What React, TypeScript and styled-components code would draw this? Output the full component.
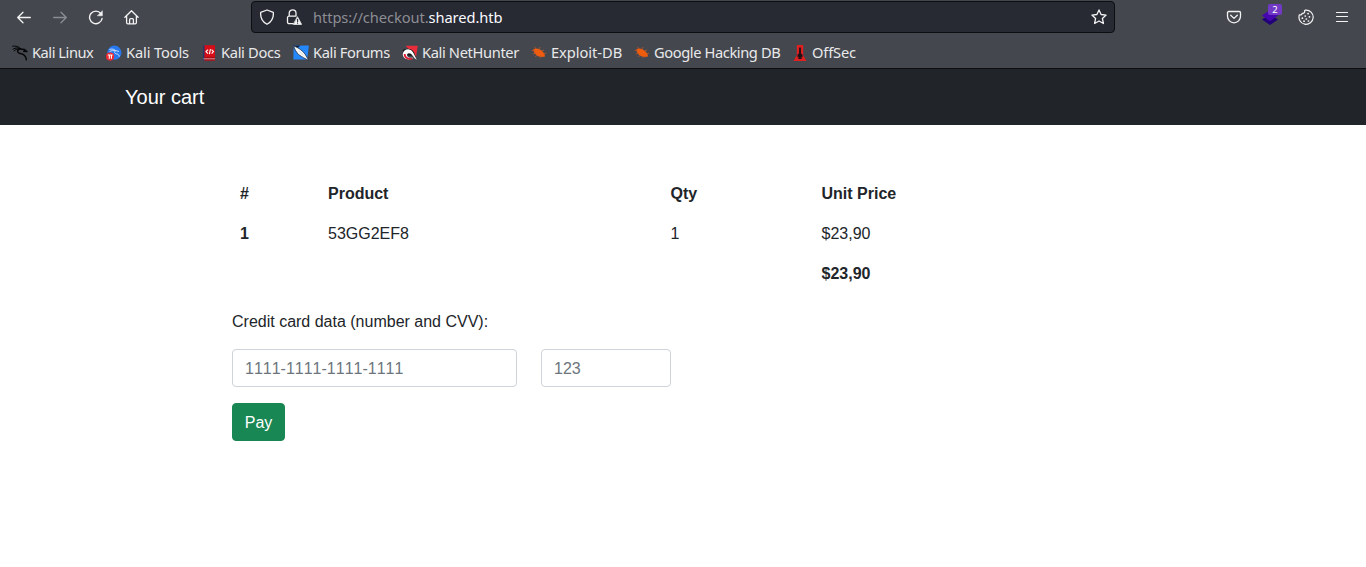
import React from "react";
import styled, { createGlobalStyle } from "styled-components";

const GlobalStyle = createGlobalStyle`
  *, *::before, *::after { box-sizing: border-box; }
  html, body { margin: 0; background: #fff; }
  body { height: 567px; overflow: hidden; }
`;

const Chrome = styled.header`
  display: flex;
  flex-direction: column;
  height: 69px;
  background: #44474e;
  border-bottom: 1px solid #0d0d10;
  font-family: "Noto Sans", sans-serif;
  font-size: 14.67px;
  color: #e9e9ea;
`;

const Toolbar = styled.div`
  display: flex;
  align-items: center;
  height: 34px;
  padding: 0 16px;
`;

const ToolGroup = styled.div<{ $width: number; $end?: boolean }>`
  display: flex;
  gap: 20px;
  width: ${(p) => p.$width}px;
  justify-content: ${(p) => (p.$end ? "flex-end" : "flex-start")};
`;

const ToolIcon = styled.span<{ $dim?: boolean }>`
  position: relative;
  display: flex;
  width: 16px;
  height: 16px;
  opacity: ${(p) => (p.$dim ? 0.4 : 1)};
`;

const Badge = styled.span`
  position: absolute;
  left: 6px;
  top: -5px;
  width: 14px;
  height: 11px;
  border-radius: 2px;
  background: #7139c4;
  color: #fff;
  font-size: 9.5px;
  line-height: 11px;
  text-align: center;
`;

const AddressBar = styled.div`
  display: flex;
  align-items: center;
  width: 864px;
  height: 32px;
  padding: 0 7px;
  border: 1px solid #0d0e12;
  border-radius: 4px;
  background: #272933;
`;

const Address = styled.span`
  flex: 1;
  margin-left: 11px;
  line-height: 20px;
  letter-spacing: -0.08px;
  color: #8d8e93;
`;

const Host = styled.span`
  color: #fbfbfe;
`;

const LockSlot = styled.span`
  display: flex;
  margin-left: 11px;
`;

const Bookmarks = styled.nav`
  display: flex;
  align-items: center;
  height: 34px;
  padding: 2px 12px 0;
`;

const Bookmark = styled.span<{ $width: number; $tracking: number }>`
  display: flex;
  align-items: center;
  gap: 4px;
  width: ${(p) => p.$width}px;
  letter-spacing: ${(p) => p.$tracking}px;
  line-height: 20px;
  white-space: nowrap;
  svg { flex: none; margin-top: 2px; }
`;

const Navbar = styled.div`
  display: flex;
  align-items: center;
  height: 56px;
  padding: 0 125px;
  background: #212529;
  color: #fff;
  font: 20px/30px "Liberation Sans", Arial, sans-serif;
`;

const Main = styled.main`
  width: 902px;
  margin-left: 232px;
  padding-top: 49px;
  color: #212529;
  font: 16px/24px "Liberation Sans", Arial, sans-serif;
`;

const CartTable = styled.table`
  width: 100%;
  table-layout: fixed;
  border-collapse: collapse;
  margin-bottom: 16px;
`;

const Col = styled.col<{ $width?: number }>`
  width: ${(p) => (p.$width ? `${p.$width}px` : "auto")};
`;

const Head = styled.th`
  padding: 8px;
  text-align: left;
  font-weight: 700;
`;

const Cell = styled.td`
  padding: 8px;
`;

const Label = styled.p`
  margin: 0 0 15px;
`;

const Fields = styled.div`
  display: flex;
  gap: 24px;
  margin-bottom: 16px;
`;

const Field = styled.input<{ $width: number }>`
  width: ${(p) => p.$width}px;
  height: 38px;
  padding: 7px 12px 5px;
  border: 1px solid #ced4da;
  border-radius: 4px;
  background: #fff;
  font: inherit;
  font-kerning: none;
  color: #212529;
  &::placeholder { color: #6c757d; opacity: 1; }
`;

const PayButton = styled.button`
  display: block;
  width: 53px;
  height: 38px;
  padding: 7px 0 5px;
  border: 1px solid #198754;
  border-radius: 4px;
  background: #198754;
  color: #fff;
  font: inherit;
`;

const Line = ({ children, width = 1.3 }: { children: React.ReactNode; width?: number }) => (
  <svg width="16" height="16" viewBox="0 0 16 16" fill="none" stroke="#f3f3f4"
    strokeWidth={width} strokeLinecap="round" strokeLinejoin="round">{children}</svg>
);

const Favicon = ({ children }: { children: React.ReactNode }) => (
  <svg width="16" height="16" viewBox="0 0 16 16">{children}</svg>
);

const BackArrow = () => <Line><path d="M14.3 8.5H1.7M7 3.2L1.7 8.5L7 13.8" /></Line>;
const ForwardArrow = () => <Line><path d="M1.7 8.5h12.6M9 3.2l5.3 5.3L9 13.8" /></Line>;
const Reload = () => (
  <Line width={1.4}>
    <path d="M14.1 9.5A6.3 6.3 0 1 1 12.9 4.6" />
    <path d="M14.4 2v4.8H9.6z" fill="#f3f3f4" strokeWidth=".5" />
  </Line>
);
const Home = () => (
  <Line>
    <path d="M.9 8.3L7.5 1.8L14.1 8.3M2.6 7.2v6.4c0 .8.5 1.3 1.3 1.3h7.2c.8 0 1.3-.5 1.3-1.3V7.2M5.6 14.7v-4c0-.7.4-1 1-1h1.8c.6 0 1 .3 1 1v4" />
  </Line>
);
const Shield = () => (
  <Line><path d="M8 1L14.3 3.3C14.8 8.5 12.6 12.8 8 15.3C3.4 12.8 1.2 8.5 1.7 3.3z" /></Line>
);
const LockWarning = () => (
  <Line>
    <path d="M7 14.6H3c-.9 0-1.5-.6-1.5-1.5V8.7c0-.9.6-1.5 1.5-1.5h6.8M3.2 7V4.2a3.4 3.4 0 0 1 6.8 0V7" />
    <path d="M11.6 8l4 7.4H7.6z" fill="#f3f3f4" strokeWidth=".8" />
    <path d="M11.6 10.4v2.2M11.6 14v.2" stroke="#272933" strokeWidth="1.1" />
  </Line>
);
const Star = () => (
  <Line><path d="M8 .9l2.1 4.6 5 .6-3.7 3.4 1 5L8 12l-4.4 2.5 1-5L.9 6.1l5-.6z" /></Line>
);
const Pocket = () => (
  <Line><path d="M2.7 2.5h10.6c.7 0 1.2.5 1.2 1.2v3.6a6.5 6.5 0 0 1-13 0V3.7c0-.7.5-1.2 1.2-1.2zM4.7 6.3L8 9.4l3.3-3.1" /></Line>
);
const Layers = () => (
  <Favicon>
    <path d="M8 5.5l8 5L8 16l-8-5.5z" fill="#220078" />
    <path d="M8 1l8 5.6-8 5.7-8-5.7z" fill="#4707b0" />
  </Favicon>
);
const Cookie = () => (
  <Line width={1.2}>
    <path d="M7.5 1.1a7.1 7.1 0 1 1-6.1 4.7c1.6.5 2.7-.2 2.7-1.5 1.7.4 3.2-.9 2.4-2.5z" />
    <path d="M10 4.6h.1M7.2 7h.1M11.4 7.8h.1M4.3 9.2h.1M8.3 10h.1M6 12.2h.1M10.4 12h.1" strokeWidth="1.7" />
  </Line>
);
const Menu = () => <Line width={1.2}><path d="M2.5 3.5h11M2.5 7.5h11M2.5 12.5h11" /></Line>;

const KaliDragon = () => (
  <Favicon>
    <g fill="none" stroke="#050607" strokeLinecap="round" strokeLinejoin="round">
      <path d="M.6 1.2C3.7.7 6.8 1.4 8.6 3.5M1.1 4.1C4 2.4 6 2.6 8.4 3.7M2.1 5.9c1.7-1.7 3.3-2 5.7-1.9" strokeWidth="1" />
      <path d="M7.9 3.9c-3.2.9-3 4 .3 4.7 3.3.5 5.7 2.1 6.1 6.1M8.5 4.1l3.7.3 2.7 2.1-3.2-.3" strokeWidth="1.5" />
    </g>
  </Favicon>
);
const ToolsMark = () => (
  <Favicon>
    <circle cx="8.4" cy="7.7" r="7.1" fill="#2878ed" />
    <path d="M3.4 4.4c3.3-.8 5.1.1 6.2 1.1M3.6 6.6c2-1.2 3.8-1.1 6-.8-2 1-.9 3 1.3 3.1 1.5.2 2.4 1.3 2.3 2.8M9.4 5.5l3.6 1" fill="none" stroke="#d7e8ff" strokeWidth=".9" />
    <circle cx="4.1" cy="11.6" r="4.1" fill="#ed2932" />
    <path d="M1.8 10h4.8M3.3 10v3.7M5.4 10v3.7" stroke="#fff" strokeWidth="1.1" />
  </Favicon>
);
const DocsMark = () => (
  <Favicon>
    <path d="M2 .5h2v15H2z" fill="#27376c" />
    <path d="M3.5.2H14v15.3H3.5z" fill="#d60d17" />
    <path d="M3.5 11.8H14v3.7H3.5z" fill="#a90c15" />
    <path d="M2.5 13.8H14" stroke="#e4cfd2" strokeWidth=".7" />
    <path d="M7 4.6L5 6.6l2 2M10.6 4.6l1.9 2-1.9 2M9.4 4.2l-1 4.9" fill="none" stroke="#fff" strokeWidth="1.1" />
  </Favicon>
);
const ForumsMark = () => (
  <Favicon>
    <path d="M.7.5h15.2l-1.7 14H.3z" fill="#2487fa" />
    <path d="M.7.5l7 .1-5.5 4z" fill="#172238" />
    <path d="M.6.9c4.4 1.4 9 4.8 11.4 8.1l3.8 6.5-5.7-3-5-3.3L2.2 5z" fill="#f7f7f7" stroke="#172238" strokeWidth=".7" />
    <path d="M6 5.8l4.8 4.8" stroke="#c1c7d0" strokeWidth=".6" />
  </Favicon>
);
const HunterMark = () => (
  <Favicon>
    <path d="M3.5.8h12.3L14 12z" fill="#e92d3b" />
    <path d="M1 4.7C5 2.7 10.2 3.7 11.9 7l3.3 8-5.5-4.3-4.3-.2L.8 8z" fill="#151619" />
    <path d="M.8 9.1C1.4 4 7.8 2.6 10.8 7c1.5 2.2 2.5 5 4.2 7.7-3.7-1.2-4.6-6.4-8-6.4-2.8 0-2.5 3.9.7 4.4l3.7.1C8 16 .6 14.7.8 9.1z" fill="#fff" />
    <path d="M2.7 9c-.2 3.8 3.5 5.4 7.5 4.6" fill="none" stroke="#df1932" strokeWidth="1.8" />
  </Favicon>
);
const Bug = () => (
  <Favicon>
    <path d="M2.5 4C5.1 2.8 8.2 3.6 10.5 5.5c2.2 1.8 3.7 4.1 3.4 6-2.6.9-6.7.4-9-1.8C3 7.8 2.1 5.6 2.5 4z" fill="#ef5c0e" />
    <path d="M5 4L3.6 1.8M8 4l1-2M10.7 6l2.4-1M4 5.7L.8 5.5M5 8l-3.3.9M7 9.8l-2.8 1.9M10 10.5l-1 2.7M13 8.5l2.3-.3" stroke="#b6582b" strokeWidth=".8" />
  </Favicon>
);
const OffSecMark = () => (
  <Favicon>
    <path d="M4.8 0h6.4v10.2l3.3 5.8H1.4l3.4-5.8z" fill="#df2020" />
    <path d="M8 1.8l1 1.7v5l1.5 1v2.7H9L10 14H6l1-1.8H5.5V9.5l1.5-1v-5z" fill="#201216" />
  </Favicon>
);

const bookmarks = [
  { label: "Kali Linux", Icon: KaliDragon, width: 94, tracking: -0.46 },
  { label: "Kali Tools", Icon: ToolsMark, width: 95, tracking: -0.14 },
  { label: "Kali Docs", Icon: DocsMark, width: 92, tracking: -0.32 },
  { label: "Kali Forums", Icon: ForumsMark, width: 109, tracking: -0.38 },
  { label: "Kali NetHunter", Icon: HunterMark, width: 129, tracking: -0.36 },
  { label: "Exploit-DB", Icon: Bug, width: 103, tracking: -0.04 },
  { label: "Google Hacking DB", Icon: Bug, width: 158, tracking: -0.4 },
  { label: "OffSec", Icon: OffSecMark, width: 64, tracking: -0.15 },
];

export default function App() {
  return (
    <>
      <GlobalStyle />
      <Chrome>
        <Toolbar>
          <ToolGroup $width={235}>
            <ToolIcon><BackArrow /></ToolIcon>
            <ToolIcon $dim><ForwardArrow /></ToolIcon>
            <ToolIcon><Reload /></ToolIcon>
            <ToolIcon><Home /></ToolIcon>
          </ToolGroup>
          <AddressBar>
            <Shield />
            <LockSlot><LockWarning /></LockSlot>
            <Address>https://checkout.<Host>shared.htb</Host></Address>
            <Star />
          </AddressBar>
          <ToolGroup $width={235} $end>
            <ToolIcon><Pocket /></ToolIcon>
            <ToolIcon><Layers /><Badge>2</Badge></ToolIcon>
            <ToolIcon><Cookie /></ToolIcon>
            <ToolIcon><Menu /></ToolIcon>
          </ToolGroup>
        </Toolbar>
        <Bookmarks>
          {bookmarks.map(({ label, Icon, width, tracking }) => (
            <Bookmark key={label} $width={width} $tracking={tracking}><Icon />{label}</Bookmark>
          ))}
        </Bookmarks>
      </Chrome>
      <Navbar>Your cart</Navbar>
      <Main>
        <CartTable>
          <colgroup><Col $width={88} /><Col $width={342.5} /><Col $width={151} /><Col /></colgroup>
          <thead>
            <tr><Head>#</Head><Head>Product</Head><Head>Qty</Head><Head>Unit Price</Head></tr>
          </thead>
          <tbody>
            <tr><Head>1</Head><Cell>53GG2EF8</Cell><Cell>1</Cell><Cell>$23,90</Cell></tr>
            <tr><Cell /><Cell /><Cell /><Head>$23,90</Head></tr>
          </tbody>
        </CartTable>
        <Label>Credit card data (number and CVV):</Label>
        <Fields>
          <Field $width={285} placeholder="1111-1111-1111-1111" />
          <Field $width={130} placeholder="123" />
        </Fields>
        <PayButton>Pay</PayButton>
      </Main>
    </>
  );
}
